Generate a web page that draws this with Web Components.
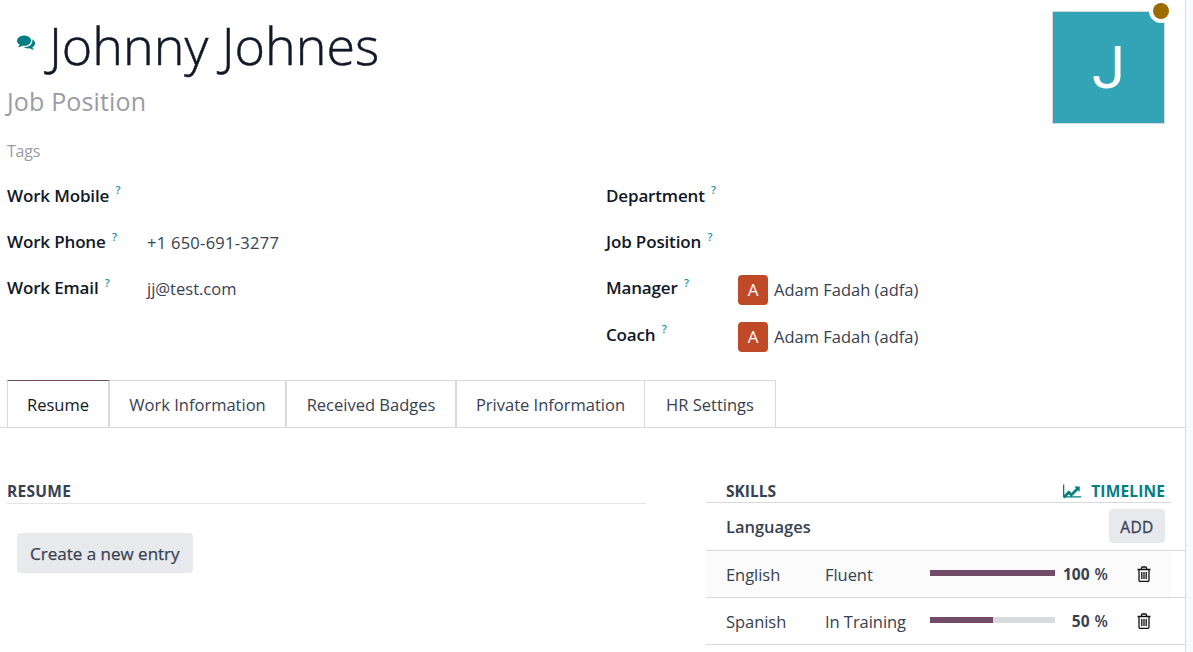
<!DOCTYPE html>
<html>
<head>
<meta charset="utf-8">
<title>Johnny Johnes</title>
<style>
  html, body { margin: 0; padding: 0; height: 100%; overflow: hidden; background: #f9fafb; }
  body { font-family: "Open Sans", "Noto Sans", sans-serif; }
</style>
</head>
<body>
<emp-sheet>
  <emp-header name="Johnny Johnes" job="Job Position" tags="Tags" initial="J"></emp-header>
  <emp-fields></emp-fields>
  <emp-tabs></emp-tabs>
  <emp-resume></emp-resume>
</emp-sheet>

<script>
const ICONS = {
  comments: 'M1408 768q0 139-94 257t-256.500 186.500-353.500 68.500q-86 0-176-16-124 88-278 128-36 9-86 16h-3q-11 0-20.500-8t-11.500-21q-1-3-1-6.500t.5-6.500 2-6l2.500-5 3.500-5.500 4-5 4.500-5 4-4.500q5-6 23-25t26-29.500 22.500-29 25-38.500 20.500-44q-124-72-195-177t-71-224q0-139 94-257t256.500-186.500 353.500-68.500 353.500 68.500 256.500 186.500 94 257zm384 256q0 120-71 224.500t-195 176.500q10 24 20.500 44t25 38.500 22.500 29 26 29.500 23 25q1 1 4 4.500t4.500 5 4 5 3.500 5.500l2.500 5 2 6 .5 6.500-1 6.500q-3 14-13 22t-22 7q-50-7-86-16-154-40-278-128-90 16-176 16-271 0-472-132 58 4 88 4 161 0 309-45t264-129q125-92 192-212t67-254q0-77-23-152 129 71 204 178t75 230z',
  chart: 'M1792 1408v128h-1792v-1280h128v1152h1664zm-128-928v435q0 21-19.500 29.500t-35.500-7.500l-121-121-633 633q-10 10-23 10t-23-10l-233-233-416 416-192-192 585-585q10-10 23-10t23 10l233 233 464-464-121-121q-16-16-7.500-35.500t29.500-19.500h435q14 0 23 9t9 23z'
};

// base class, every element just sets its html in the shadow root
class BaseEl extends HTMLElement {
  constructor() {
    super();
    this.attachShadow({ mode: 'open' });
  }
  connectedCallback() { this.shadowRoot.innerHTML = this.html(); }
}

class EmpSheet extends BaseEl {
  html() {
    return `
      <style>
        :host {
          display: block;
          width: 1185px;
          height: 652px;
          background: #fff;
          border-right: 1px solid #d8dadd;
          overflow: hidden;
          color: #374151;
          font-size: 16.500px;
        }
      </style>
      <slot></slot>
    `;
  }
}

class EmpHeader extends BaseEl {
  html() {
    return `
      <style>
        :host { display: flex; justify-content: space-between; align-items: flex-start; height: 179px; padding-left: 7px; }
        .name { display: flex; align-items: center; height: 70px; margin-top: 10px; color: #111827; font-size: 52px; font-weight: 300; -webkit-text-stroke: .5px #111827; line-height: 70px; }
        .name svg { width: 18px; height: 18px; margin: 2px 14px 8px 10px; fill: #017e84; stroke: none; }
        .job { color: #9a9ca5; font-size: 25px; line-height: 34px; letter-spacing: .15px; margin-top: 4px; }
        .tags { color: #9a9ca5; font-size: 16px; line-height: 24px; letter-spacing: -.2px; margin-top: 21px; }
        .avatar { position: relative; box-sizing: border-box; width: 113px; height: 113px; margin: 11px 20px 0 0; background: #32a4b5; border: 1px solid #d8dadd; color: #fff; font-family: Roboto, sans-serif; font-size: 60px; display: flex; align-items: center; justify-content: center; }
        .dot { position: absolute; top: -9px; right: -5px; width: 16px; height: 16px; border-radius: 50%; background: #9c6b00; box-shadow: 0 0 0 4px #fff; }
      </style>
      <div>
        <div class="name">
          <svg viewBox="0 0 1792 1792"><path d="${ICONS.comments}"/></svg>
          <span>${this.getAttribute('name')}</span>
        </div>
        <div class="job">${this.getAttribute('job')}</div>
        <div class="tags">${this.getAttribute('tags')}</div>
      </div>
      <div class="avatar">${this.getAttribute('initial')}<span class="dot"></span></div>
    `;
  }
}

class EmpField extends BaseEl {
  html() {
    const user = this.getAttribute('user');
    const value = this.getAttribute('value');
    return `
      <style>
        :host { display: grid; grid-template-columns: var(--label-w) 1fr; height: 46.200px; align-items: start; }
        .label { color: #111827; font-size: 17px; font-weight: 600; line-height: 24px; letter-spacing: -.15px; padding-top: 5px; }
        sup { color: #1c8fa8; font-size: 11px; font-weight: 600; line-height: 0; margin-left: 2px; position: relative; top: -1px; }
        .value { line-height: 24px; padding-top: 6px; letter-spacing: var(--value-ls, 0); }
        .user { display: flex; align-items: center; gap: 6px; padding-top: 4px; line-height: 30px; }
        .badge { width: 30px; height: 30px; border-radius: 4px; background: #c04a27; color: #fff; display: flex; align-items: center; justify-content: center; font-size: 17px; }
      </style>
      <div class="label">${this.getAttribute('label')} <sup>?</sup></div>
      ${user
        ? `<div class="user"><span class="badge">${user[0]}</span><span>${user}</span></div>`
        : `<div class="value">${value || ''}</div>`}
    `;
  }
}

class EmpFields extends BaseEl {
  html() {
    return `
      <style>
        :host { display: grid; grid-template-columns: 599px 1fr; padding-left: 7px; height: 201px; }
        .left { --label-w: 140px; }
        .right { --label-w: 132px; }
      </style>
      <div class="left">
        <emp-field label="Work Mobile"></emp-field>
        <emp-field label="Work Phone" value="+1 650-691-3277" style="--value-ls:.27px"></emp-field>
        <emp-field label="Work Email" value="jj@test.com"></emp-field>
      </div>
      <div class="right">
        <emp-field label="Department"></emp-field>
        <emp-field label="Job Position"></emp-field>
        <emp-field label="Manager" user="Adam Fadah (adfa)"></emp-field>
        <emp-field label="Coach" user="Adam Fadah (adfa)"></emp-field>
      </div>
    `;
  }
}

class EmpTabs extends BaseEl {
  html() {
    const tabs = [
      ['Resume', 103], ['Work Information', 177], ['Received Badges', 170],
      ['Private Information', 188], ['HR Settings', 131]
    ];
    return `
      <style>
        :host { display: flex; height: 47px; padding-left: 7px; border-bottom: 1px solid #d8dadd; }
        .tab { box-sizing: border-box; height: 47px; border: 1px solid #d8dadd; border-left-width: 0; border-bottom-width: 0; border-right-width: 2px; display: flex; align-items: center; justify-content: center; }
        .tab:first-of-type { border-left-width: 1px; border-top-color: #714b67; color: #111827; }
        .tab:nth-of-type(n+4) { border-right-width: 1px; }
      </style>
      ${tabs.map(t => `<div class="tab" style="width:${t[1]}px">${t[0]}</div>`).join('')}
    `;
  }
}

class EmpResume extends BaseEl {
  html() {
    return `
      <style>
        :host { display: grid; grid-template-columns: 639px 1fr; column-gap: 60px; padding: 52px 0 0 7px; }
        h3 { margin: 0; font-size: 15.500px; font-weight: 700; line-height: 23px; letter-spacing: .3px; color: #374151; border-bottom: 1px solid #e2e4e8; height: 23px; }
        .btn { display: inline-block; margin: 29px 0 0 10px; padding: 0 13px; height: 40px; line-height: 41px; border-radius: 4px; background: #e7e9ed; -webkit-text-stroke: .25px #374151; font-size: 17px; }
      </style>
      <section>
        <h3>RESUME</h3>
        <span class="btn">Create a new entry</span>
      </section>
      <emp-skills></emp-skills>
    `;
  }
}

class EmpSkills extends BaseEl {
  html() {
    return `
      <style>
        :host { display: block; }
        .head { display: flex; justify-content: space-between; align-items: center; width: 465px; box-sizing: border-box; height: 23px; padding: 0 6px 0 20px; border-bottom: 1px solid #d8dadd; }
        .head b { font-size: 15.500px; line-height: 22px; letter-spacing: 0; color: #374151; }
        .timeline { display: flex; align-items: center; gap: 10px; color: #017e84; font-size: 15.500px; font-weight: 700; letter-spacing: .15px; }
        .timeline svg { width: 18px; height: 18px; fill: #017e84; }
        .group { display: flex; justify-content: space-between; align-items: center; width: 465px; box-sizing: border-box; height: 47px; padding: 0 6px 0 20px; color: #374151; font-weight: 600; letter-spacing: -.02px; }
        .add { background: #e7e9ed; border-radius: 4px; width: 56px; height: 34px; line-height: 37px; margin-bottom: 1px; text-align: center; font-size: 15.500px; letter-spacing: .4px; font-weight: 400; -webkit-text-stroke: .3px #374151; }
        .rows { border-top: 1px solid #d8dadd; }
      </style>
      <div class="head"><b>SKILLS</b>
        <span class="timeline"><svg viewBox="0 0 1792 1792"><path d="${ICONS.chart}"/></svg>TIMELINE</span>
      </div>
      <div class="group"><span>Languages</span><span class="add">ADD</span></div>
      <div class="rows">
        <skill-row name="English" level="Fluent" pct="100" shade></skill-row>
        <skill-row name="Spanish" level="In Training" pct="50"></skill-row>
      </div>
    `;
  }
}

class SkillRow extends BaseEl {
  html() {
    const pct = this.getAttribute('pct');
    return `
      <style>
        :host { display: block; height: 46px; border-bottom: 1px solid #d8dadd; }
        .row { display: grid; grid-template-columns: 99px 105px 125px 53px 1fr; align-items: center; width: 445px; height: 46px; padding-left: 20px; letter-spacing: -.05px; }
        .shade { background: #fbfbfb; }
        .bar { height: 6px; background: #d8dadd; margin-bottom: 2px; }
        .bar i { display: block; height: 100%; background: #714b67; }
        .pct { text-align: right; font-size: 15.500px; font-weight: 700; letter-spacing: 0; }
        .pct span { font-weight: 600; margin-left: 1px; }
        svg { display: block; width: 16px; height: 16px; margin-left: 28px; fill: none; stroke: #111; stroke-width: 1.300; }
      </style>
      <div class="row ${this.hasAttribute('shade') ? 'shade' : ''}">
        <span>${this.getAttribute('name')}</span>
        <span>${this.getAttribute('level')}</span>
        <div class="bar"><i style="width:${pct}%"></i></div>
        <span class="pct">${pct} <span>%</span></span>
        <svg viewBox="0 0 16 16"><path d="M1.500 3.500h13M5.500 3.500V2q0-1 1-1h3q1 0 1 1v1.500M3 3.500V14q0 1.500 1.500 1.500h7q1.500 0 1.500-1.500V3.500M5.800 6v7M8 6v7M10.200 6v7"/></svg>
      </div>
    `;
  }
}

customElements.define('emp-sheet', EmpSheet);
customElements.define('emp-header', EmpHeader);
customElements.define('emp-field', EmpField);
customElements.define('emp-fields', EmpFields);
customElements.define('emp-tabs', EmpTabs);
customElements.define('emp-resume', EmpResume);
customElements.define('emp-skills', EmpSkills);
customElements.define('skill-row', SkillRow);
</script>
</body>
</html>
